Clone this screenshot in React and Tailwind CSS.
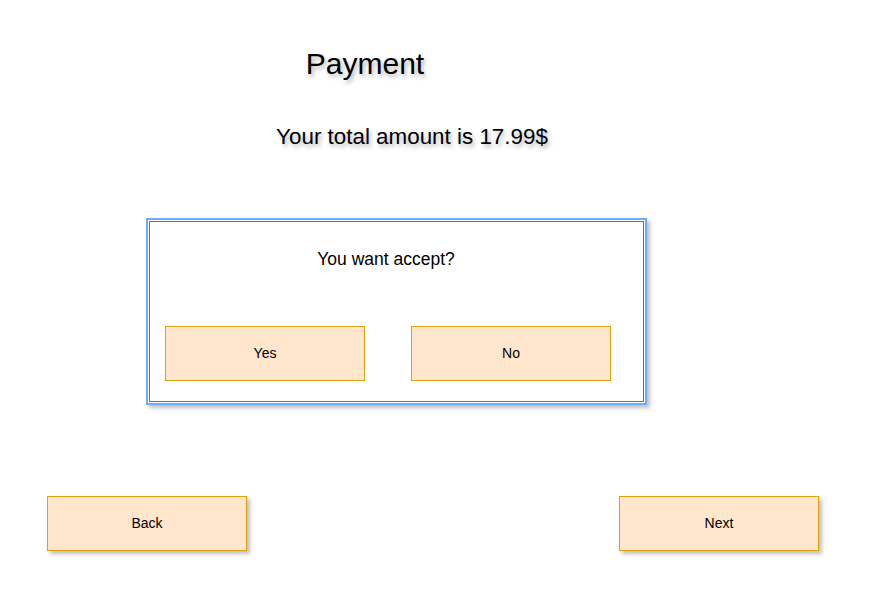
export default function App() {
  const btn =
    "flex items-center justify-center w-[200px] h-[55px] bg-[#ffe6cc] border border-[#dca20a] text-[14px] text-black";
  return (
    <div className="w-[889px] h-[600px] bg-white font-['Liberation_Sans',Arial,sans-serif] text-black">
      <div className="pt-[46px] ml-[265px] w-[200px] text-center text-[30px] leading-[36px] [text-shadow:2px_3px_4px_rgba(0,0,0,0.3)]">
        Payment
      </div>
      <div className="mt-[40px] ml-[262px] w-[300px] text-center text-[22.4px] leading-[30px] [text-shadow:2px_3px_4px_rgba(0,0,0,0.3)]">
        Your total amount is 17.99$
      </div>

      <div className="mt-[66px] ml-[146px] w-[501px] h-[187px] border-2 border-[#6aaefb] bg-white p-px shadow-[3px_3px_4px_rgba(0,0,0,0.25)]">
        <div className="h-full border border-[#1f80f0] pl-[15px]">
          <div className="pt-[25px] w-[442px] text-center text-[17.5px] leading-[24px]">
            You want accept?
          </div>
          <div className="mt-[55px] flex gap-[46px]">
            <div className={btn}>Yes</div>
            <div className={btn}>No</div>
          </div>
        </div>
      </div>

      <div className="mt-[91px] flex">
        <div className={btn + " ml-[47px] shadow-[3px_3px_4px_rgba(0,0,0,0.25)]"}>Back</div>
        <div className={btn + " ml-[372px] shadow-[3px_3px_4px_rgba(0,0,0,0.25)]"}>Next</div>
      </div>
    </div>
  );
}
